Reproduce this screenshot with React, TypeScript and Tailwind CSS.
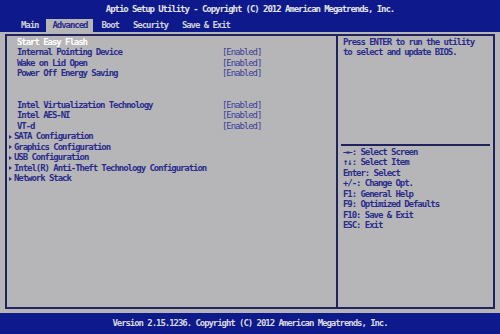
const settings = [
    { label: 'Start Easy Flash', active: true },
    { label: 'Internal Pointing Device', value: '[Enabled]' },
    { label: 'Wake on Lid Open', value: '[Enabled]' },
    { label: 'Power Off Energy Saving', value: '[Enabled]' },
    { label: '' },
    { label: '' },
    { label: 'Intel Virtualization Technology', value: '[Enabled]' },
    { label: 'Intel AES-NI', value: '[Enabled]' },
    { label: 'VT-d', value: '[Enabled]' },
    { label: 'SATA Configuration', sub: true },
    { label: 'Graphics Configuration', sub: true },
    { label: 'USB Configuration', sub: true },
    { label: 'Intel(R) Anti-Theft Technology Configuration', sub: true },
    { label: 'Network Stack', sub: true },
];

const tabs = ['Main', 'Advanced', 'Boot', 'Security', 'Save & Exit'];

const keys = [
    '\u2192\u2190: Select Screen',
    '\u2191\u2193: Select Item',
    'Enter: Select',
    '+/-: Change Opt.',
    'F1: General Help',
    'F9: Optimized Defaults',
    'F10: Save & Exit',
    'ESC: Exit',
];

const App = () => {
    return (
        <div className="w-[500px] h-[334px] flex flex-col bg-[#b6b6b8] font-['DejaVu_Sans_Mono',monospace] font-bold text-[9px] tracking-[-1.05px] overflow-hidden">
            {/* header */}
            <div className="h-[32px] bg-[#0e1a8c] flex flex-col">
                <div className="h-[19px] flex items-center justify-center text-[#e4e4ea] pt-px">
                    Aptio Setup Utility - Copyright (C) 2012 American Megatrends, Inc.
                </div>
                <div className="h-[13px] flex items-stretch pl-[15px] gap-[2px]">
                    {tabs.map((t) => (
                        <div
                            key={t}
                            className={
                                t === 'Advanced'
                                    ? 'px-[6px] flex items-center bg-[#b6b6b8] text-[#2a2c8c]'
                                    : 'px-[6px] flex items-center text-[#cfd0dc]'
                            }
                        >
                            {t}
                        </div>
                    ))}
                </div>
            </div>

            {/* body */}
            <div className="flex-1 px-[5px] pt-[2px] pb-[4px] flex">
                <div className="flex-1 flex border-2 border-[#20235e]">
                    <div className="w-[331px] border-r-2 border-[#20235e] pt-px">
                        {settings.map((s, i) => (
                            <div key={i} className="h-[10.5px] flex items-center leading-none">
                                {s.sub ? (
                                    <div className="flex items-center pl-[2px]">
                                        <span className="w-0 h-0 border-y-[2.5px] border-y-transparent border-l-[3px] border-l-[#2a2c8c] mr-[2px]" />
                                        <span className="text-[#2a2c8c]">{s.label}</span>
                                    </div>
                                ) : (
                                    <>
                                        <span className={`pl-[10px] w-[215px] ${s.active ? 'text-white' : 'text-[#2a2c8c]'}`}>
                                            {s.label}
                                        </span>
                                        {s.value && <span className="text-[#3a3c9a] font-normal">{s.value}</span>}
                                    </>
                                )}
                            </div>
                        ))}
                    </div>
                    <div className="flex-1 flex flex-col px-[3px]">
                        <div className="h-[108px] pt-px pl-[2px] text-[#2a2c8c]">
                            <div className="h-[10.5px] flex items-center">Press ENTER to run the utility</div>
                            <div className="h-[10.5px] flex items-center">to select and update BIOS.</div>
                        </div>
                        <div className="border-t-2 border-[#20235e] pt-[1px] pl-[2px] text-[#2a2c8c]">
                            {keys.map((k) => (
                                <div key={k} className="h-[10.5px] flex items-center">{k}</div>
                            ))}
                        </div>
                    </div>
                </div>
            </div>

            {/* footer */}
            <div className="h-[21px] bg-[#0e1a8c] flex items-center justify-center text-[#d8d8e0]">
                Version 2.15.1236. Copyright (C) 2012 American Megatrends, Inc.
            </div>
        </div>
    );
};

export default App;
